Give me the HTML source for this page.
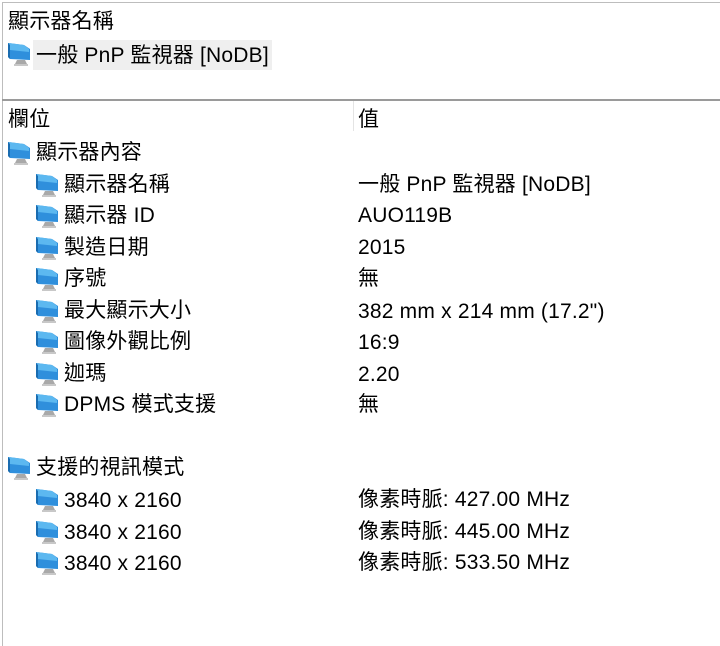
<!DOCTYPE html>
<html><head><meta charset="utf-8"><style>
body{margin:0;width:720px;height:646px;background:#fff;overflow:hidden;font-family:"Liberation Sans","Noto Sans CJK TC",sans-serif;color:#000;position:relative}
.t{position:absolute;font-size:21px;line-height:24px;white-space:nowrap;letter-spacing:0.2px}
svg.i{position:absolute;width:26px;height:28px}
.hl{position:absolute;left:33px;top:40px;width:239px;height:30px;background:#efefef}
</style></head><body>
<svg width="0" height="0" style="position:absolute"><defs>
<g id="m"><polygon points="1,3 17,5 23,9 23,20 3,19 1,17" fill="#2f8fdc"/><polygon points="2,3 17,5 22,9 22,12 3,10" fill="#5cb8f0"/><polygon points="1,3 3,5 3,19 1,17" fill="#1a6cb0"/><polygon points="10,20 18,20 20,24 8,24" fill="#a9a9a9"/><rect x="7" y="24" width="14" height="2" fill="#c8c8c8"/></g>
</defs></svg>
<div style="position:absolute;left:2px;top:2px;width:718px;height:1px;background:#bdbdbd"></div>
<div style="position:absolute;left:2px;top:2px;width:1px;height:644px;background:#bdbdbd"></div>
<div style="position:absolute;left:2px;top:99px;width:718px;height:2px;background:#9a9a9a"></div>
<div style="position:absolute;left:353px;top:101px;width:1px;height:30px;background:#e4e4e4"></div>
<div class="t" style="left:8px;top:10px">顯示器名稱</div>
<div class="hl"></div>
<svg class="i" style="left:7px;top:40px"><use href="#m"/></svg>
<div class="t" style="left:36px;top:44px">一般 PnP 監視器 [NoDB]</div>
<div class="t" style="left:8px;top:108px">欄位</div>
<div class="t" style="left:358px;top:108px">值</div>

<svg class="i" style="left:7px;top:139px"><use href="#m"/></svg><div class="t" style="left:36px;top:141px">顯示器內容</div>
<svg class="i" style="left:35px;top:171px"><use href="#m"/></svg><div class="t" style="left:64px;top:173px">顯示器名稱</div><div class="t" style="left:358px;top:173px">一般 PnP 監視器 [NoDB]</div>
<svg class="i" style="left:35px;top:202px"><use href="#m"/></svg><div class="t" style="left:64px;top:204px">顯示器 ID</div><div class="t" style="left:358px;top:204px">AUO119B</div>
<svg class="i" style="left:35px;top:234px"><use href="#m"/></svg><div class="t" style="left:64px;top:236px">製造日期</div><div class="t" style="left:358px;top:236px">2015</div>
<svg class="i" style="left:35px;top:265px"><use href="#m"/></svg><div class="t" style="left:64px;top:267px">序號</div><div class="t" style="left:358px;top:267px">無</div>
<svg class="i" style="left:35px;top:297px"><use href="#m"/></svg><div class="t" style="left:64px;top:299px">最大顯示大小</div><div class="t" style="left:358px;top:300px">382 mm x 214 mm (17.2")</div>
<svg class="i" style="left:35px;top:328px"><use href="#m"/></svg><div class="t" style="left:64px;top:330px">圖像外觀比例</div><div class="t" style="left:358px;top:331px">16:9</div>
<svg class="i" style="left:35px;top:360px"><use href="#m"/></svg><div class="t" style="left:64px;top:362px">迦瑪</div><div class="t" style="left:358px;top:363px">2.20</div>
<svg class="i" style="left:35px;top:391px"><use href="#m"/></svg><div class="t" style="left:64px;top:393px">DPMS 模式支援</div><div class="t" style="left:358px;top:393px">無</div>

<svg class="i" style="left:7px;top:454px"><use href="#m"/></svg><div class="t" style="left:36px;top:456px">支援的視訊模式</div>
<svg class="i" style="left:35px;top:486px"><use href="#m"/></svg><div class="t" style="left:64px;top:489px">3840 x 2160</div><div class="t" style="left:358px;top:488px">像素時脈: 427.00 MHz</div>
<svg class="i" style="left:35px;top:518px"><use href="#m"/></svg><div class="t" style="left:64px;top:521px">3840 x 2160</div><div class="t" style="left:358px;top:520px">像素時脈: 445.00 MHz</div>
<svg class="i" style="left:35px;top:549px"><use href="#m"/></svg><div class="t" style="left:64px;top:552px">3840 x 2160</div><div class="t" style="left:358px;top:551px">像素時脈: 533.50 MHz</div>
</body></html>
